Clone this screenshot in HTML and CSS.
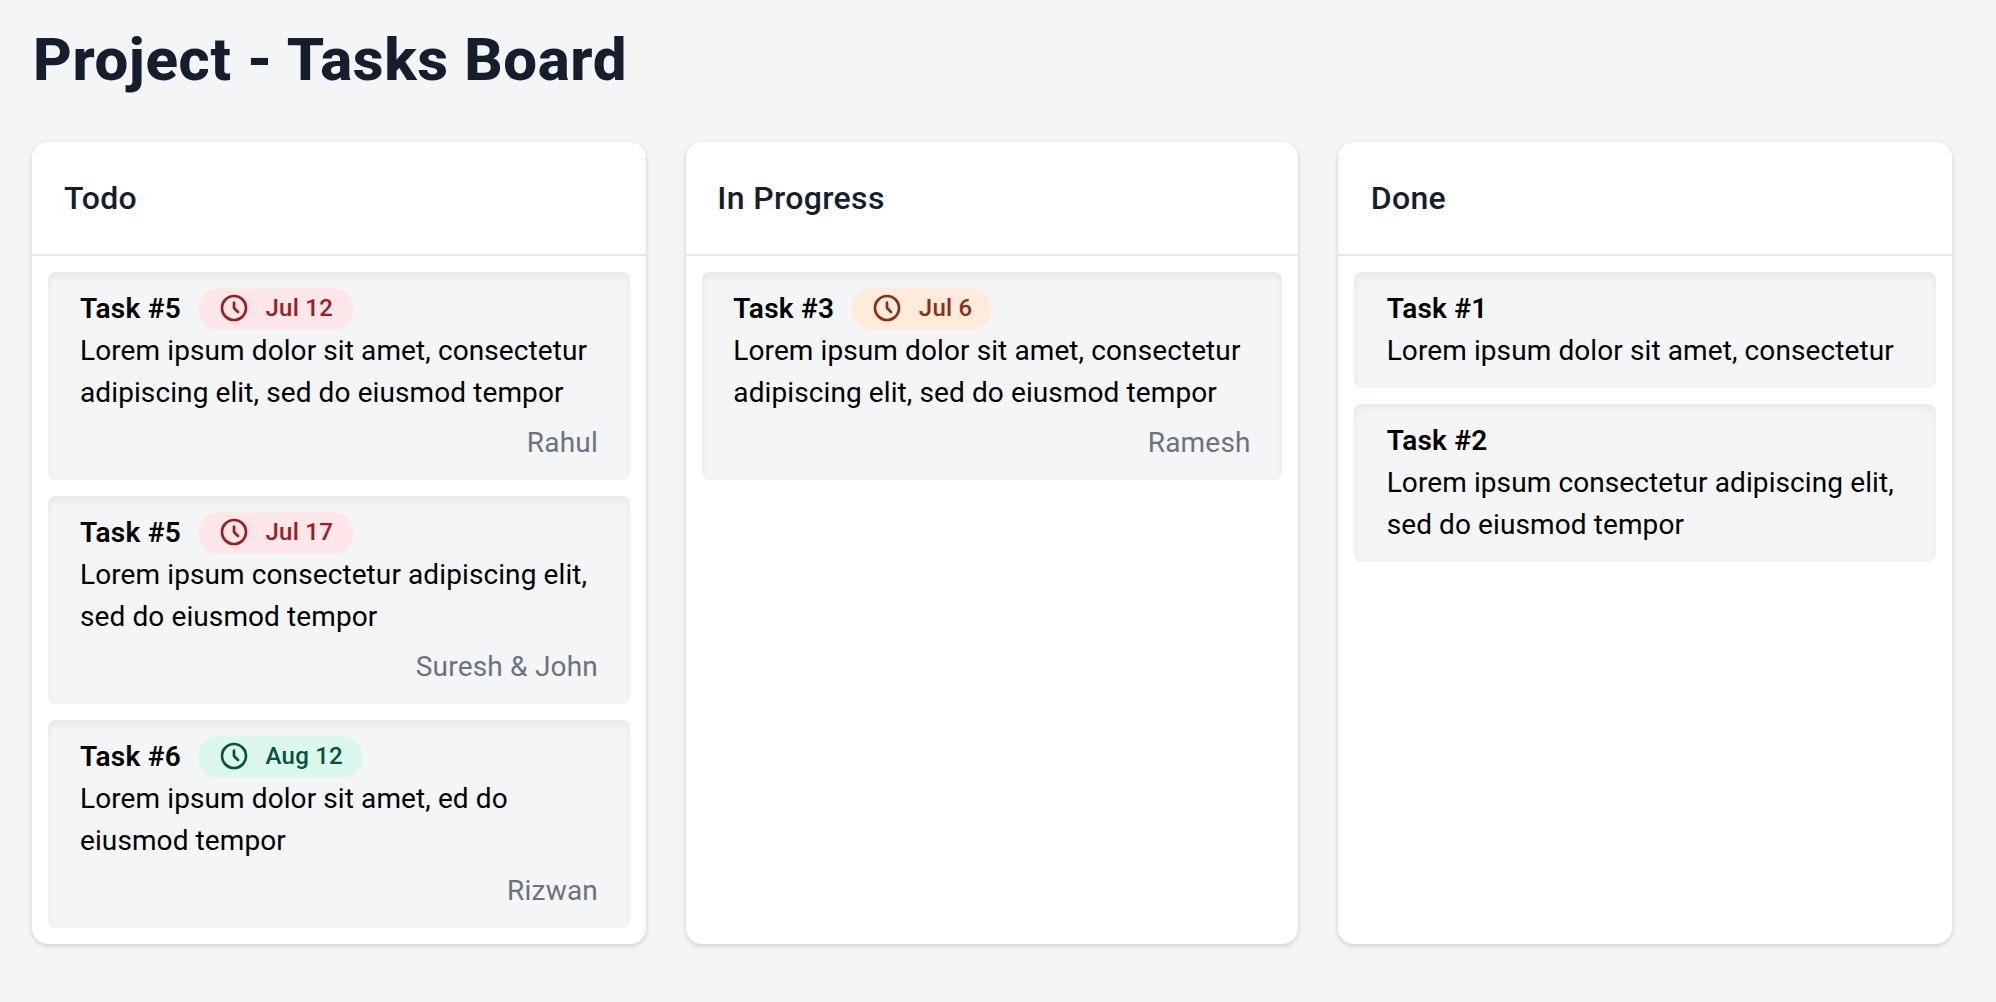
FILE: index.html
```html
<!DOCTYPE html>
<html lang="en">
<head>
  <meta charset="utf-8">
  <title>Project - Tasks Board</title>
  <link rel="stylesheet" href="styles.css">
</head>
<body>
  <svg class="sprite" aria-hidden="true">
    <symbol id="clock" viewBox="0 0 24 24">
      <path d="M12 8v4l3 3m6-3a9 9 0 11-18 0 9 9 0 0118 0z" fill="none" stroke="currentColor" stroke-width="2" stroke-linecap="round" stroke-linejoin="round"/>
    </symbol>
  </svg>
  <main class="page">
    <h1 class="page-title">Project - Tasks Board</h1>
    <div class="board">
      <section class="column">
        <h2 class="column-title">Todo</h2>
        <div class="tasks">
          <article class="task">
            <header class="task-head">
              <h3 class="task-title">Task #5</h3>
              <span class="due due-red"><svg class="icon"><use href="#clock"/></svg><span class="date">Jul 12</span></span>
            </header>
            <p class="text">Lorem ipsum dolor sit amet, consectetur<br>adipiscing elit, sed do eiusmod tempor</p>
            <p class="owner">Rahul</p>
          </article>
          <article class="task">
            <header class="task-head">
              <h3 class="task-title">Task #5</h3>
              <span class="due due-red"><svg class="icon"><use href="#clock"/></svg><span class="date">Jul 17</span></span>
            </header>
            <p class="text">Lorem ipsum consectetur adipiscing elit,<br>sed do eiusmod tempor</p>
            <p class="owner">Suresh &amp; John</p>
          </article>
          <article class="task">
            <header class="task-head">
              <h3 class="task-title">Task #6</h3>
              <span class="due due-green"><svg class="icon"><use href="#clock"/></svg><span class="date">Aug 12</span></span>
            </header>
            <p class="text">Lorem ipsum dolor sit amet, ed do<br>eiusmod tempor</p>
            <p class="owner">Rizwan</p>
          </article>
        </div>
      </section>
      <section class="column column-progress">
        <h2 class="column-title">In Progress</h2>
        <div class="tasks">
          <article class="task">
            <header class="task-head">
              <h3 class="task-title">Task #3</h3>
              <span class="due due-orange"><svg class="icon"><use href="#clock"/></svg><span class="date">Jul 6</span></span>
            </header>
            <p class="text">Lorem ipsum dolor sit amet, consectetur<br>adipiscing elit, sed do eiusmod tempor</p>
            <p class="owner">Ramesh</p>
          </article>
        </div>
      </section>
      <section class="column column-done">
        <h2 class="column-title">Done</h2>
        <div class="tasks">
          <article class="task">
            <header class="task-head"><h3 class="task-title">Task #1</h3></header>
            <p class="text">Lorem ipsum dolor sit amet, consectetur</p>
          </article>
          <article class="task">
            <header class="task-head"><h3 class="task-title">Task #2</h3></header>
            <p class="text">Lorem ipsum consectetur adipiscing elit,<br>sed do eiusmod tempor</p>
          </article>
        </div>
      </section>
    </div>
  </main>
</body>
</html>
```

FILE: styles.css
```css
* { box-sizing: border-box; }

body {
  margin: 0;
  background: #f4f5f7;
  color: #000;
  font: 400 28px/42px Roboto, "Liberation Sans", sans-serif;
}

h1, h2, h3, p { margin: 0; }

.sprite { display: none; }

.page { padding: 33px 44px 58px 32px; }

.page-title {
  margin-bottom: 55px;
  padding-left: 1px;
  color: #161e2e;
  font-size: 60px;
  font-weight: 800;
  line-height: 54px;
  letter-spacing: 0.6px;
}

.board {
  display: grid;
  grid-template-columns: 614px 612px 614px;
  gap: 40px;
  height: 802px;
}

.column {
  --inset: 32px;
  background: #fff;
  border-radius: 16px;
  box-shadow: 0 2px 6px rgba(0, 0, 0, 0.1), 0 2px 4px rgba(0, 0, 0, 0.06);
}

.column-progress { --inset: 31.33px; }
.column-done { --inset: 32.67px; }

.column-title {
  height: 114px;
  padding: 32px var(--inset);
  border-bottom: 2px solid #e5e7eb;
  color: #161e2e;
  font-size: 32px;
  font-weight: 500;
  line-height: 48px;
  letter-spacing: 0.35px;
}

.tasks {
  display: flex;
  flex-direction: column;
  gap: 16px;
  padding: 16px;
}

.task {
  padding: 16px var(--inset);
  border-radius: 8px;
  background: #f4f5f7;
  box-shadow: inset 0 4px 8px rgba(0, 0, 0, 0.06);
}

.task-head {
  display: flex;
  align-items: center;
  gap: 16px;
  height: 42px;
}

.task-title {
  width: 101.5px;
  font-size: 28px;
  font-weight: 600;
  letter-spacing: 0.25px;
  white-space: nowrap;
}

.text {
  letter-spacing: 0.1px;
  white-space: nowrap;
}

.owner {
  margin-top: 8px;
  color: #6b7280;
  text-align: right;
  letter-spacing: 0.2px;
}

.due {
  display: flex;
  gap: 16px;
  height: 42px;
  padding: 4px 20px;
  border-radius: 21px;
}

.icon {
  width: 32px;
  height: 32px;
}

.date {
  font-size: 24px;
  font-weight: 500;
  line-height: 32px;
  letter-spacing: 0.25px;
}

.due-red { background: #ffe6e8; color: #a01a20; }
.due-red .date { min-width: 68px; }
.due-orange { background: #ffebdc; color: #8f2c14; }
.due-green { background: #dcf7ec; color: #03543f; }
```
